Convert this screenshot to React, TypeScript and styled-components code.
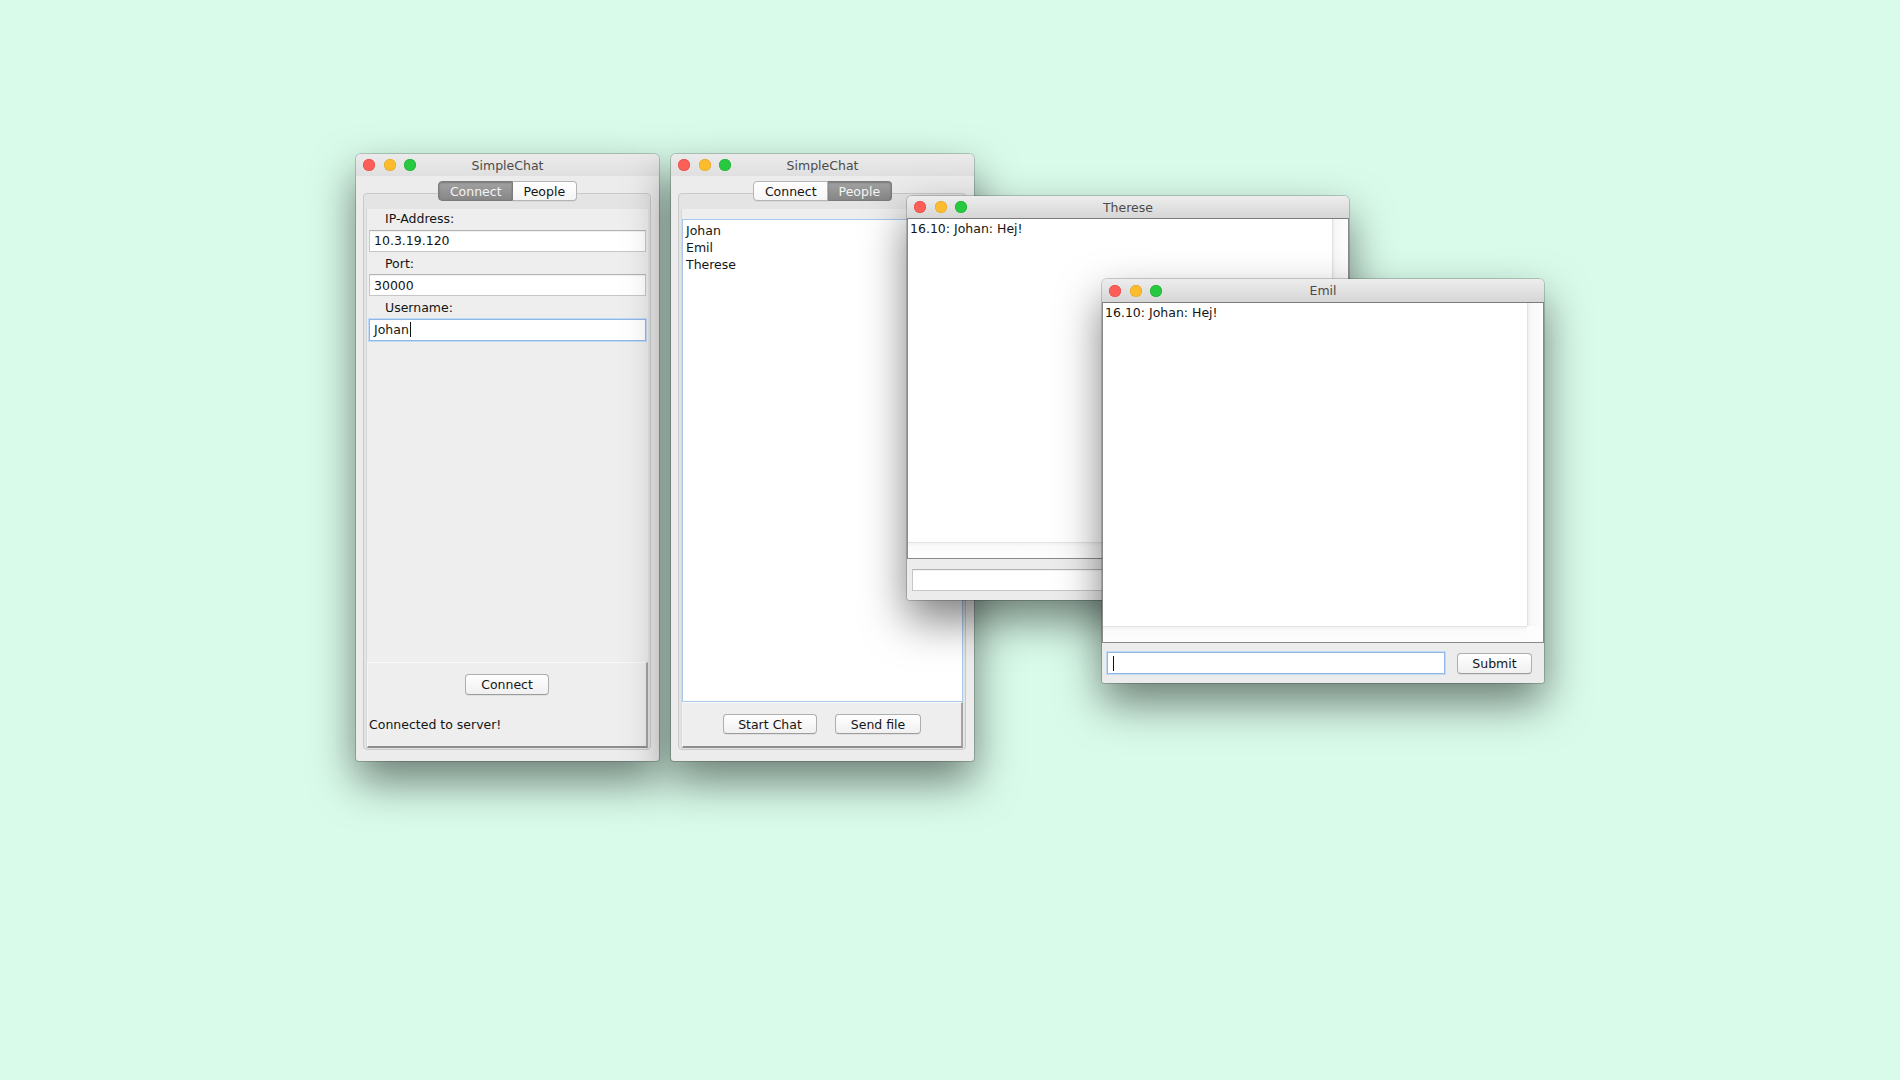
import React from "react";
import styled, { createGlobalStyle } from "styled-components";

const Global = createGlobalStyle`
  html, body { margin: 0; padding: 0; background: #d9fbea; }
  body { font-family: "DejaVu Sans", "Liberation Sans", sans-serif; color: #141414; }
  * { box-sizing: border-box; }
`;

const Desktop = styled.div`
  position: relative;
  width: 1900px;
  height: 1080px;
  overflow: hidden;
  background: #d9fbea;
`;

const Win = styled.div<{ $x: number; $y: number; $w: number; $h: number; $z: number }>`
  position: absolute;
  left: ${(p) => p.$x}px;
  top: ${(p) => p.$y}px;
  width: ${(p) => p.$w}px;
  height: ${(p) => p.$h}px;
  z-index: ${(p) => p.$z};
  display: flex;
  flex-direction: column;
  background: #ececec;
  border-radius: 5px 5px 3px 3px;
  overflow: hidden;
  box-shadow: 0 0 0 1px rgba(0, 0, 0, 0.18), 0 20px 44px rgba(0, 0, 0, 0.5);
`;

const TitleBar = styled.div<{ $h: number; $chat?: boolean }>`
  flex-shrink: 0;
  height: ${(p) => p.$h}px;
  display: grid;
  grid-template-columns: 1fr auto 1fr;
  align-items: center;
  padding: 0 7px;
  background: ${(p) =>
    p.$chat
      ? "linear-gradient(#ededed, #d6d6d6)"
      : "linear-gradient(#ebebeb, #e0e0e0)"};
`;

const Lights = styled.div`
  display: flex;
  gap: 8.5px;
`;

const Light = styled.span<{ $c: string; $b: string }>`
  width: 12px;
  height: 12px;
  border-radius: 50%;
  background: ${(p) => p.$c};
  box-shadow: inset 0 0 0 0.5px ${(p) => p.$b};
`;

const Title = styled.div`
  font-size: 12.5px;
  color: #4b4b4b;
  line-height: 1;
  padding-top: 2px;
`;

const TrafficLights = () => (
  <Lights>
    <Light $c="#fc5f57" $b="#e0443e" />
    <Light $c="#fdbc2e" $b="#dea123" />
    <Light $c="#28c840" $b="#1aab29" />
  </Lights>
);

/* ---------- SimpleChat main window ---------- */

const Body = styled.div`
  flex: 1;
  display: flex;
  flex-direction: column;
  padding: 5px 0 11px;
  min-height: 0;
`;

const TabRow = styled.div`
  display: flex;
  justify-content: center;
  height: 20px;
  position: relative;
  z-index: 1;
`;

const Tab = styled.div<{ $active: boolean }>`
  height: 20px;
  padding: 0 10.5px;
  display: flex;
  align-items: center;
  font-size: 12.5px;
  border: 1px solid ${(p) => (p.$active ? "#7b7b7b" : "#b4b4b4")};
  background: ${(p) =>
    p.$active ? "linear-gradient(#a2a2a2, #868686)" : "linear-gradient(#ffffff, #f5f5f5)"};
  color: ${(p) => (p.$active ? "#f4f4f4" : "#151515")};
  box-shadow: ${(p) =>
    p.$active ? "inset 0 1px 2px rgba(0,0,0,0.25)" : "0 1px 0 rgba(0,0,0,0.05)"};
  &:first-child {
    border-radius: 4px 0 0 4px;
  }
  &:last-child {
    border-radius: 0 4px 4px 0;
    border-left: none;
  }
`;

const Panel = styled.div`
  flex: 1;
  margin: -8px 8px 0 7px;
  display: flex;
  flex-direction: column;
  border: 1px solid #c9c9c9;
  border-radius: 4px;
  background: #e4e4e4;
  padding: 15px 2px 1px 2px;
  min-height: 0;
`;

const Content = styled.div`
  flex: 1;
  display: flex;
  flex-direction: column;
  background: #eeeeee;
  border-left: 1px solid #d8d8d8;
  min-height: 0;
`;

const Form = styled.div`
  display: flex;
  flex-direction: column;
  padding: 0 2px;
  margin-top: -2px;
`;

const Label = styled.div`
  height: 22.5px;
  line-height: 23px;
  padding-left: 16px;
  font-size: 12.5px;
`;

const Field = styled.div<{ $focus?: boolean }>`
  height: 22px;
  display: flex;
  align-items: center;
  padding: 0 4px;
  font-size: 12.5px;
  background: #ffffff;
  border: 1px solid ${(p) => (p.$focus ? "#8fb7e6" : "#c6c6c6")};
  border-top-color: ${(p) => (p.$focus ? "#8fb7e6" : "#b3b3b3")};
  box-shadow: ${(p) =>
    p.$focus ? "0 0 0 1px #c3dbf5" : "inset 0 1px 1px rgba(0,0,0,0.06)"};
`;

const Caret = styled.span`
  display: inline-block;
  width: 1px;
  height: 15px;
  background: #111;
  margin-left: 1px;
`;

const Spacer = styled.div`
  flex: 1;
`;

const BottomPanel = styled.div<{ $pt: number; $pb: number }>`
  display: flex;
  flex-direction: column;
  align-items: center;
  padding: ${(p) => p.$pt}px 0 ${(p) => p.$pb}px;
  border-top: 1px solid #fafafa;
  border-left: 1px solid #f6f6f6;
  border-right: 2px solid #a3a3a3;
  border-bottom: 2px solid #8e8e8e;
  background: #eeeeee;
`;

const ButtonRow = styled.div`
  display: flex;
  gap: 18px;
  justify-content: center;
`;

const Button = styled.div<{ $w: number; $h?: number }>`
  width: ${(p) => p.$w}px;
  height: ${(p) => p.$h ?? 21}px;
  display: flex;
  align-items: center;
  justify-content: center;
  font-size: 12.5px;
  color: #151515;
  border: 1px solid #aeaeae;
  border-bottom-color: #9d9d9d;
  border-radius: 4px;
  background: linear-gradient(#ffffff, #f0f0f0);
  box-shadow: 0 1px 0 rgba(0, 0, 0, 0.06);
`;

const Status = styled.div`
  align-self: stretch;
  margin-top: 22px;
  padding-left: 1px;
  line-height: 16px;
  font-size: 12.5px;
`;

const List = styled.div`
  flex: 1;
  margin-top: 10px;
  background: #ffffff;
  border: 1px solid #a9c8ec;
  padding: 2px 3px;
`;

const ListItem = styled.div`
  line-height: 17px;
  font-size: 12.5px;
`;

/* ---------- Chat windows ---------- */

const ScrollPane = styled.div`
  flex: 1;
  display: grid;
  grid-template-columns: 1fr 16px;
  grid-template-rows: 1fr 16px;
  border: 1px solid #8a8a8a;
  border-top-color: #7c7c7c;
  min-height: 0;
`;

const TextArea = styled.div`
  background: #ffffff;
  padding: 1px 2px;
  font-size: 12.5px;
  line-height: 17px;
`;

const VTrack = styled.div`
  background: linear-gradient(to right, #eeeeee, #f8f8f8 3px, #fdfdfd);
  border-left: 1px solid #e2e2e2;
`;

const HTrack = styled.div`
  background: linear-gradient(#f2f2f2, #fbfbfb 4px, #fdfdfd);
  border-top: 1px solid #e3e3e3;
`;

const Corner = styled.div`
  background: #fdfdfd;
`;

const ChatBar = styled.div<{ $h: number }>`
  flex-shrink: 0;
  height: ${(p) => p.$h}px;
  display: flex;
  align-items: center;
  gap: 12px;
  padding: 0 12px 0 5px;
  background: #ececec;
`;

const ChatInput = styled(Field)`
  flex: 1;
  padding-left: 4px;
`;

const ChatWindow = ({
  x,
  y,
  z,
  title,
  focus,
  barH,
  titleH,
}: {
  x: number;
  y: number;
  z: number;
  title: string;
  focus?: boolean;
  barH: number;
  titleH: number;
}) => (
  <Win $x={x} $y={y} $w={442} $h={404} $z={z}>
    <TitleBar $h={titleH} $chat>
      <TrafficLights />
      <Title>{title}</Title>
      <span />
    </TitleBar>
    <ScrollPane>
      <TextArea>16.10: Johan: Hej!</TextArea>
      <VTrack />
      <HTrack />
      <Corner />
    </ScrollPane>
    <ChatBar $h={barH}>
      <ChatInput $focus={focus}>{focus && <Caret />}</ChatInput>
      <Button $w={75} $h={21}>Submit</Button>
    </ChatBar>
  </Win>
);

export default function App() {
  return (
    <>
      <Global />
      <Desktop>
        <Win $x={356} $y={154} $w={303} $h={607} $z={1}>
          <TitleBar $h={22}>
            <TrafficLights />
            <Title>SimpleChat</Title>
            <span />
          </TitleBar>
          <Body>
            <TabRow>
              <Tab $active>Connect</Tab>
              <Tab $active={false}>People</Tab>
            </TabRow>
            <Panel>
              <Content>
                <Form>
                  <Label>IP-Address:</Label>
                  <Field>10.3.19.120</Field>
                  <Label>Port:</Label>
                  <Field>30000</Field>
                  <Label>Username:</Label>
                  <Field $focus>
                    Johan
                    <Caret />
                  </Field>
                </Form>
                <Spacer />
                <BottomPanel $pt={11} $pb={13}>
                  <Button $w={84}>Connect</Button>
                  <Status>Connected to server!</Status>
                </BottomPanel>
              </Content>
            </Panel>
          </Body>
        </Win>

        <Win $x={671} $y={154} $w={303} $h={607} $z={2}>
          <TitleBar $h={22}>
            <TrafficLights />
            <Title>SimpleChat</Title>
            <span />
          </TitleBar>
          <Body>
            <TabRow>
              <Tab $active={false}>Connect</Tab>
              <Tab $active>People</Tab>
            </TabRow>
            <Panel>
              <Content>
                <List>
                  <ListItem>Johan</ListItem>
                  <ListItem>Emil</ListItem>
                  <ListItem>Therese</ListItem>
                </List>
                <BottomPanel $pt={11} $pb={12}>
                  <ButtonRow>
                    <Button $w={94} $h={20}>Start Chat</Button>
                    <Button $w={86} $h={20}>Send file</Button>
                  </ButtonRow>
                </BottomPanel>
              </Content>
            </Panel>
          </Body>
        </Win>

        <ChatWindow x={907} y={196} z={3} title="Therese" titleH={22} barH={41} />
        <ChatWindow x={1102} y={279} z={4} title="Emil" titleH={23} barH={40} focus />
      </Desktop>
    </>
  );
}
